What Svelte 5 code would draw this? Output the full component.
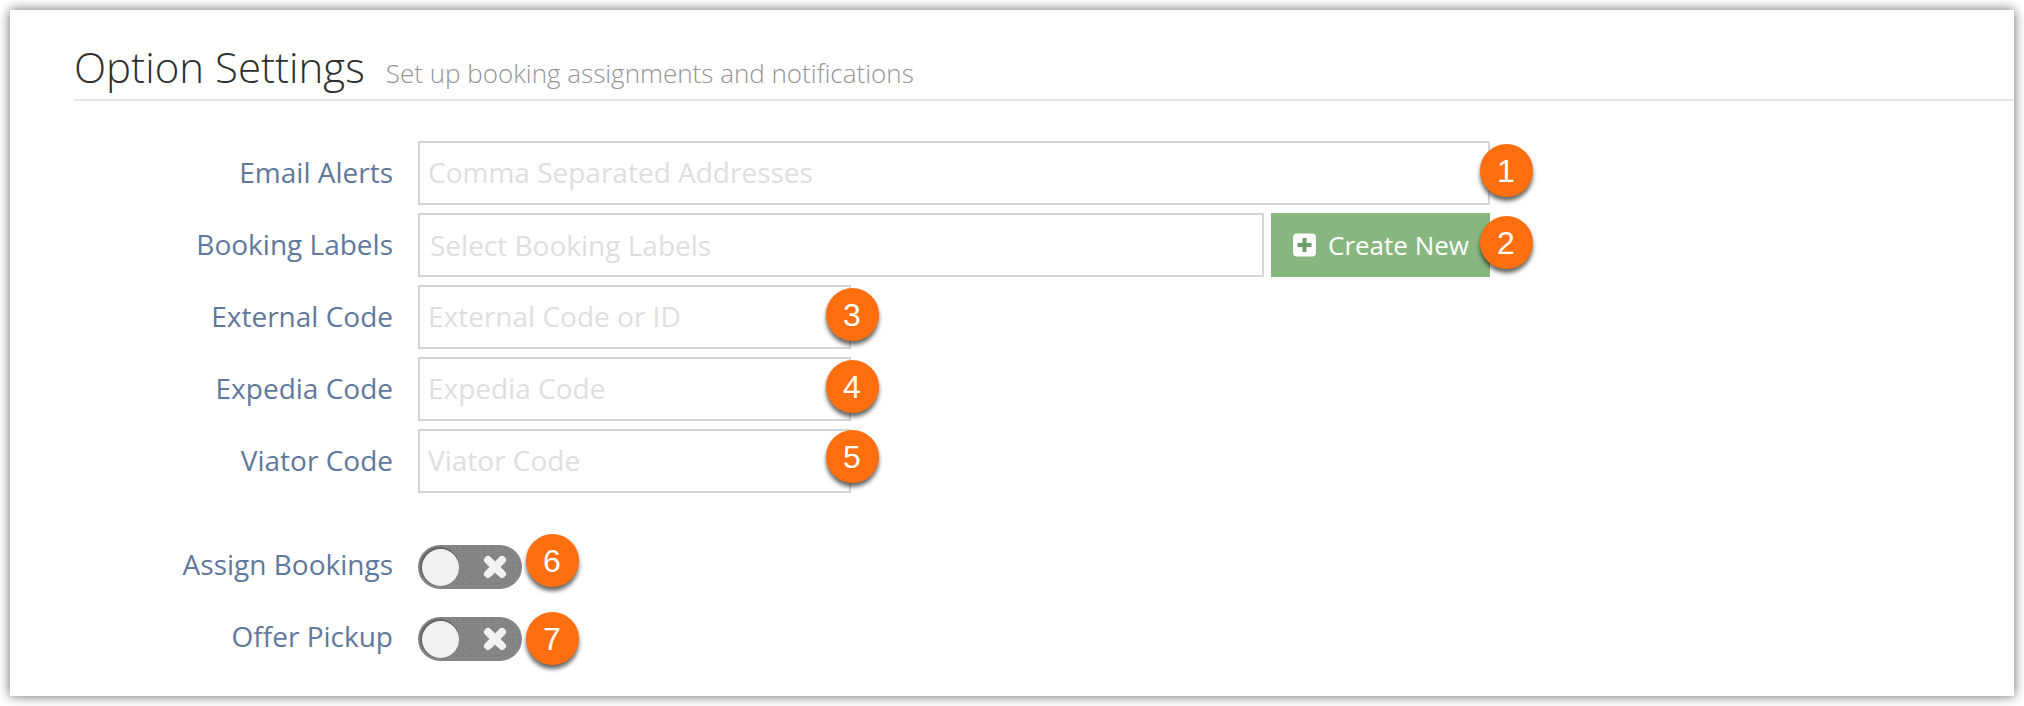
<script>
  const fields = [
    { label: "Email Alerts", placeholder: "Comma Separated Addresses", size: "full", n: 1, x: 1088, y: 29 },
    { label: "Booking Labels", placeholder: "Select Booking Labels", size: "select", n: 2, x: 1088, y: 29, create: true },
    { label: "External Code", placeholder: "External Code or ID", size: "short", n: 3, x: 434, y: 29 },
    { label: "Expedia Code", placeholder: "Expedia Code", size: "short", n: 4, x: 434, y: 29 },
    { label: "Viator Code", placeholder: "Viator Code", size: "short", n: 5, x: 434, y: 27 }
  ];
  const toggles = [
    { label: "Assign Bookings", n: 6, x: 134, y: 25 },
    { label: "Offer Pickup", n: 7, x: 134, y: 31 }
  ];
</script>

<div class="card">
  <header class="head">
    <h1>Option Settings</h1>
    <small>Set up booking assignments and notifications</small>
  </header>

  <form class="form">
    {#each fields as f}
      <div class="row">
        <label for={"field-" + f.n}>{f.label}</label>
        <div class="field">
          <input id={"field-" + f.n} class={f.size} type="text" placeholder={f.placeholder} />
          {#if f.create}
            <button type="button" class="create">
              <svg width="23" height="24" viewBox="0 0 23 24">
                <rect x="0" y="0.5" width="23" height="23" rx="4" fill="#fff" />
                <path d="M11.5 5v14M4.5 12h14" stroke="#6f9f68" stroke-width="4" />
              </svg>
              Create New
            </button>
          {/if}
          <span class="badge" style:left={f.x + "px"} style:top={f.y + "px"}>{f.n}</span>
        </div>
      </div>
    {/each}

    <div class="toggles">
      {#each toggles as t}
        <div class="row">
          <span class="label">{t.label}</span>
          <div class="field">
            <div class="switch">
              <span class="knob"></span>
              <svg class="cross" width="24" height="24" viewBox="0 0 24 24">
                <path d="M5 5l14 14M19 5L5 19" stroke="#f2f2f2" stroke-width="8" stroke-linecap="round" />
              </svg>
            </div>
            <span class="badge" style:left={t.x + "px"} style:top={t.y + "px"}>{t.n}</span>
          </div>
        </div>
      {/each}
    </div>
  </form>
</div>

<style>
  :global(body) {
    background: #fff;
    font-family: "Open Sans", sans-serif;
  }

  .card {
    box-sizing: border-box;
    width: 2004px;
    height: 686px;
    margin: 10px;
    padding: 0 0 0 64px;
    background: #fff;
    box-shadow: 0 0 11px rgba(0, 0, 0, 0.6);
  }

  .head {
    box-sizing: border-box;
    display: flex;
    align-items: baseline;
    gap: 21px;
    height: 91px;
    padding: 32px 0 0 0;
    border-bottom: 2px solid #e6e6e6;
  }

  h1 {
    margin: 0;
    font-size: 42px;
    font-weight: 300;
    line-height: 50px;
    color: #2e2e2e;
  }

  small {
    font-size: 26px;
    font-weight: 300;
    color: #949494;
  }

  .form {
    padding-top: 40px;
  }

  .row {
    display: flex;
    align-items: center;
    height: 64px;
    margin-bottom: 8px;
  }

  label,
  .label {
    width: 319px;
    margin-right: 25px;
    padding-bottom: 2px;
    text-align: right;
    font-size: 28px;
    color: #5f789c;
  }

  .label {
    padding-bottom: 6px;
  }

  .field {
    position: relative;
    display: flex;
    align-items: center;
    gap: 7px;
    height: 100%;
  }

  input {
    box-sizing: border-box;
    height: 64px;
    padding: 0 8px 2px;
    border: 2px solid #d6d6d6;
    border-radius: 0;
    outline: none;
    font-family: inherit;
    font-size: 28px;
    background: #fff;
  }

  input::placeholder {
    color: #dedede;
    opacity: 1;
  }

  .full {
    width: 1072px;
  }

  .select {
    width: 846px;
    padding: 0 8px 0 10px;
  }

  .short {
    width: 433px;
  }

  .create {
    display: flex;
    align-items: center;
    justify-content: flex-start;
    gap: 12px;
    box-sizing: border-box;
    width: 219px;
    height: 64px;
    padding: 0 0 0 22px;
    border: 0;
    background: #87b77f;
    color: #fff;
    font-family: inherit;
    font-size: 26px;
  }

  .toggles {
    margin-top: 42px;
  }

  .switch {
    position: relative;
    display: flex;
    align-items: center;
    justify-content: space-between;
    box-sizing: border-box;
    width: 104px;
    height: 44px;
    padding: 0 15px 0 4px;
    border-radius: 22px;
    background-color: #858585;
    background-image: radial-gradient(#6f6f6f 0.7px, transparent 1px);
    background-size: 7px 7px;
  }

  .knob {
    width: 37px;
    height: 37px;
    border-radius: 50%;
    background: #f1f1f1;
    box-shadow: -1px -1px 0 1px #666;
  }

  .badge {
    position: absolute;
    box-sizing: border-box;
    width: 53px;
    height: 53px;
    margin: -26.5px 0 0 -26.5px;
    padding-top: 2px;
    display: flex;
    align-items: center;
    justify-content: center;
    border-radius: 50%;
    background: #ff6f0f;
    box-shadow: 0 4px 4px rgba(0, 0, 0, 0.6);
    color: #fff;
    font-family: "Liberation Sans", Arial, sans-serif;
    font-size: 32px;
    z-index: 1;
  }
</style>
